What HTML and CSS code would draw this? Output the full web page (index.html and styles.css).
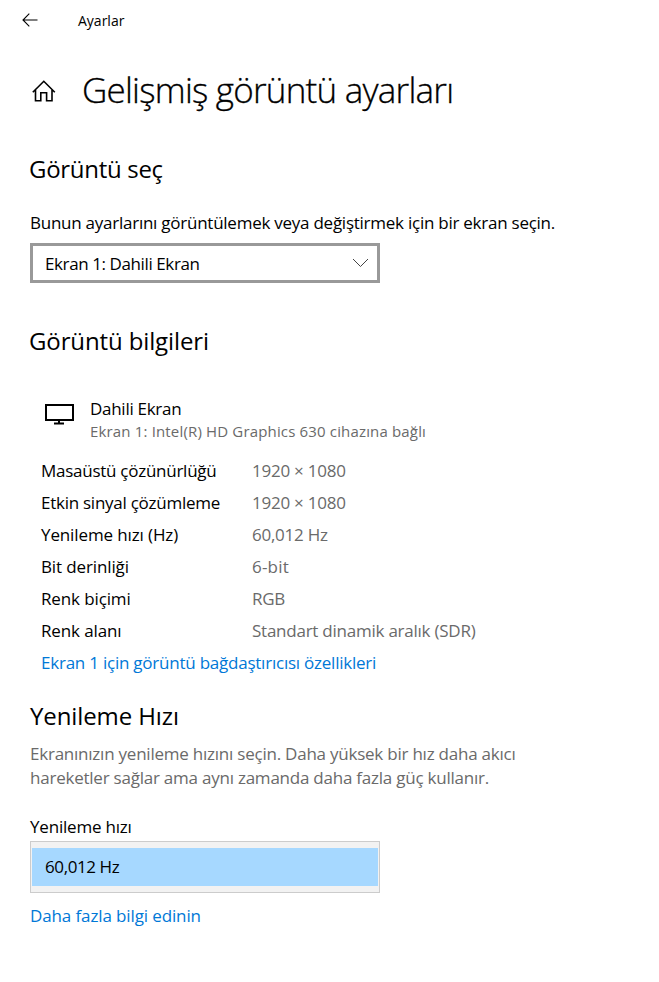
FILE: index.html
```html
<!DOCTYPE html>
<html lang="tr">
<head>
    <meta charset="UTF-8">
    <meta name="viewport" content="width=device-width, initial-scale=1.0">
    <title>Ayarlar</title>
    <link rel="stylesheet" href="styles.css">
</head>
<body>

    <header class="titlebar">
        <svg class="back" width="16" height="14" viewBox="0 0 16 14">
            <path d="M7.3 0.7L1 7l6.3 6.3M1 7h14.5" />
        </svg>
        <span class="app-name">Ayarlar</span>
    </header>

    <div class="page-title">
        <svg class="home" width="24" height="22" viewBox="0 0 24 22">
            <path d="M0.8 12.3L11.8 1.3l11 11M3.5 10v10.7h5.3v-8h5.8v8h5.4V10" />
        </svg>
        <h1>Gelişmiş görüntü ayarları</h1>
    </div>

    <main>
        <section class="select-display">
            <h2 class="tight">Görüntü seç</h2>
            <p class="label">Bunun ayarlarını görüntülemek veya değiştirmek için bir ekran seçin.</p>
            <div class="dropdown">
                <span>Ekran 1: Dahili Ekran</span>
                <svg width="17" height="10" viewBox="0 0 17 10">
                    <path d="M1 1l7.5 7.5L16 1" />
                </svg>
            </div>
        </section>

        <section class="display-info">
            <h2>Görüntü bilgileri</h2>
            <div class="display">
                <svg class="monitor" width="30" height="22" viewBox="0 0 30 22">
                    <path d="M2 2h27v15H2zM15 17v4M10 20.5h10" />
                </svg>
                <div>
                    <div class="display-name">Dahili Ekran</div>
                    <div class="display-desc">Ekran 1: Intel(R) HD Graphics 630 cihazına bağlı</div>
                </div>
            </div>
            <dl class="specs">
                <dt class="long">Masaüstü çözünürlüğü</dt><dd>1920 × 1080</dd>
                <dt class="long">Etkin sinyal çözümleme</dt><dd>1920 × 1080</dd>
                <dt>Yenileme hızı (Hz)</dt><dd>60,012 Hz</dd>
                <dt>Bit derinliği</dt><dd class="wide">6-bit</dd>
                <dt>Renk biçimi</dt><dd>RGB</dd>
                <dt>Renk alanı</dt><dd>Standart dinamik aralık (SDR)</dd>
            </dl>
            <a class="link adapter" href="#">Ekran 1 için görüntü bağdaştırıcısı özellikleri</a>
        </section>

        <section class="refresh">
            <h2>Yenileme Hızı</h2>
            <p class="hint">Ekranınızın yenileme hızını seçin. Daha yüksek bir hız daha akıcı<br>hareketler sağlar ama aynı zamanda daha fazla güç kullanır.</p>
            <p class="list-label">Yenileme hızı</p>
            <div class="list">
                <div class="list-item">60,012 Hz</div>
            </div>
            <a class="link more" href="#">Daha fazla bilgi edinin</a>
        </section>
    </main>

</body>
</html>
```
FILE: styles.css
```css
* {
    box-sizing: border-box;
}
body {
    margin: 0;
    background-color: #fff;
    color: #000;
    font-family: "Open Sans", "Noto Sans", sans-serif;
    font-size: 17px;
    line-height: 24px;
    white-space: nowrap;
}
h1, h2, p, dl, dd {
    margin: 0;
    font-weight: 400;
}
svg {
    display: block;
    flex: none;
    fill: none;
    stroke: #000;
}
.titlebar {
    display: flex;
    height: 41px;
    padding: 11px 0 0 22px;
}
.back {
    margin: 2px 40px 0 0;
    stroke-width: 1.1;
}
.app-name {
    font-size: 14px;
    line-height: 20px;
}
.page-title {
    display: flex;
    height: 112px;
    padding: 24px 0 0 32px;
}
.home {
    margin: 15px 26px 0 0;
    stroke-width: 1.6;
}
h1 {
    font-size: 35px;
    font-weight: 300;
    line-height: 50px;
    letter-spacing: -0.78px;
    -webkit-text-stroke: 0.3px #000;
}
main {
    padding-left: 30px;
}
h2 {
    margin-left: -1px;
    font-size: 24px;
    line-height: 32px;
    letter-spacing: -0.12px;
}
.tight {
    letter-spacing: -0.3px;
}
.select-display {
    height: 172px;
}
.label {
    margin: 26px 0 8px;
    letter-spacing: -0.25px;
}
.dropdown {
    display: flex;
    justify-content: space-between;
    align-items: center;
    width: 350px;
    height: 40px;
    padding: 0 8px 0 12px;
    border: 3px solid #999;
    letter-spacing: -0.4px;
}
.dropdown span {
    padding-top: 2px;
}
.dropdown svg {
    stroke: #444;
}
.display-info {
    height: 375px;
}
.display {
    display: flex;
    margin-top: 40px;
    padding-left: 14px;
}
.monitor {
    margin: 6px 16px 0 0;
    stroke-width: 2;
}
.display-name {
    letter-spacing: -0.28px;
}
.display-desc {
    margin-top: -1px;
    color: #6a6a6a;
    font-size: 15px;
    line-height: 22px;
    letter-spacing: 0.16px;
}
.specs {
    display: grid;
    grid-template-columns: 211px auto;
    grid-auto-rows: 32px;
    margin-top: 13px;
    padding-left: 11px;
    line-height: 32px;
}
dt {
    letter-spacing: -0.12px;
}
.long {
    letter-spacing: -0.26px;
}
dd {
    color: #6a6a6a;
    letter-spacing: -0.24px;
}
.wide {
    letter-spacing: 0.2px;
}
.link {
    display: block;
    color: #0078d7;
    text-decoration: none;
}
.adapter {
    margin: 4px 0 0 11px;
    letter-spacing: -0.23px;
}
.refresh h2 {
    margin-left: 0;
    letter-spacing: -0.1px;
}
.hint {
    margin: 10px 0 0;
    color: #6a6a6a;
    letter-spacing: -0.23px;
}
.list-label {
    margin: 25px 0 2px;
    letter-spacing: -0.2px;
}
.list {
    width: 350px;
    height: 52px;
    padding: 6px 1px;
    border: 1px solid #ccc;
    background-color: #f2f2f2;
}
.list-item {
    height: 38px;
    padding-left: 13px;
    background-color: #a6d8ff;
    line-height: 38px;
    letter-spacing: -0.4px;
}
.more {
    margin-top: 11px;
    letter-spacing: -0.12px;
}
```
